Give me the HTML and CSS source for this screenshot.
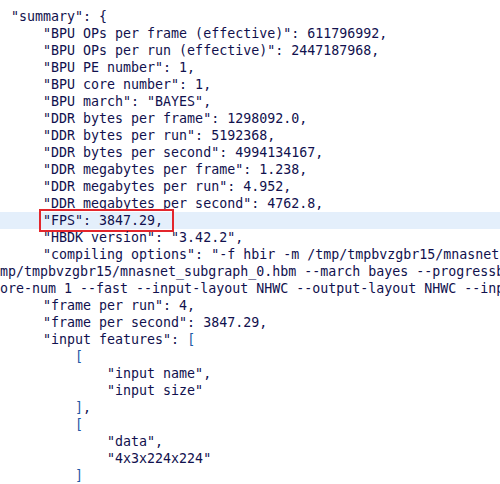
FILE: index.html
```html
<!DOCTYPE html>
<html>
<head>
<meta charset="utf-8">
<link rel="stylesheet" href="styles.css">
</head>
<body>
<div class="code">
<div class="ln">"summary": {</div>
<div class="ln">    "BPU OPs per frame (effective)": 611796992,</div>
<div class="ln">    "BPU OPs per run (effective)": 2447187968,</div>
<div class="ln">    "BPU PE number": 1,</div>
<div class="ln">    "BPU core number": 1,</div>
<div class="ln">    "BPU march": "BAYES",</div>
<div class="ln">    "DDR bytes per frame": 1298092.0,</div>
<div class="ln">    "DDR bytes per run": 5192368,</div>
<div class="ln">    "DDR bytes per second": 4994134167,</div>
<div class="ln">    "DDR megabytes per frame": 1.238,</div>
<div class="ln">    "DDR megabytes per run": 4.952,</div>
<div class="ln">    "DDR megabytes per second": 4762.8,</div>
<div class="ln hl"><span class="box"></span>    "FPS": 3847.29,</div>
<div class="ln">    "HBDK version": "3.42.2",</div>
<div class="ln">    "compiling options": "-f hbir -m /tmp/tmpbvzgbr15/mnasnet</div>
<div class="ln wrap">mp/tmpbvzgbr15/mnasnet_subgraph_0.hbm --march bayes --progressb</div>
<div class="ln wrap">ore-num 1 --fast --input-layout NHWC --output-layout NHWC --inp</div>
<div class="ln">    "frame per run": 4,</div>
<div class="ln">    "frame per second": 3847.29,</div>
<div class="ln">    "input features": <span class="br">[</span></div>
<div class="ln">        <span class="br">[</span></div>
<div class="ln">            "input name",</div>
<div class="ln">            "input size"</div>
<div class="ln">        <span class="br">]</span>,</div>
<div class="ln">        <span class="br">[</span></div>
<div class="ln">            "data",</div>
<div class="ln">            "4x3x224x224"</div>
<div class="ln">        <span class="br">]</span></div>
</div>
</body>
</html>
```
FILE: styles.css
```css
html, body {
  margin: 0;
  padding: 0;
  background: #ffffff;
}
body {
  width: 500px;
  height: 484px;
  overflow: hidden;
}
.code {
  padding-top: 8px;
  font-family: "DejaVu Sans Mono", monospace;
  font-size: 13.3px;
  line-height: 17px;
  color: #11114e;
}
.ln {
  position: relative;
  white-space: pre;
  overflow: hidden;
  padding-left: 11px;
  height: 17px;
}
.ln.wrap {
  padding-left: 0;
}
.ln.hl {
  background: #e4effb;
  overflow: visible;
}
.box {
  position: absolute;
  left: 39px;
  top: -3px;
  width: 131px;
  height: 19px;
  border: 2px solid #e3262c;
}
.br {
  color: #1f5aa6;
}
```
